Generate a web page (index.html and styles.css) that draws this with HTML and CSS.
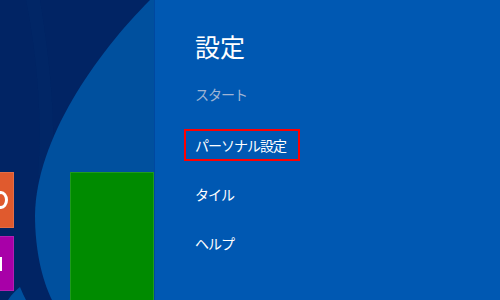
FILE: index.html
```html
<!DOCTYPE html>
<html>
<head>
    <title>設定</title>
    <link rel="stylesheet" href="styles.css">
</head>
<body>
    <div class="screen">
        <div class="start">
            <svg class="start-bg" width="155" height="300" viewBox="0 0 155 300">
                <rect width="155" height="300" fill="#012464"/>
                <path d="M26,0 C38,60 42,120 38,175 L52,175 C56,120 50,60 40,0 Z" fill="#022868" opacity="0.5"/>
                <path d="M150,0 C95,55 36,140 35,215 C35,250 42,280 52,300 L155,300 L155,0 Z" fill="#00509e"/>
                <path d="M8,300 C12,294 16,290 20,287 C22,292 24,296 26,300 Z" fill="#00509e"/>
                <rect x="154" width="1" height="300" fill="#0048a0"/>
            </svg>
            <div class="tiles">
                <div class="tile-col">
                    <div class="tile orange"><span class="ring"></span></div>
                    <div class="tile magenta"><span class="bar"></span></div>
                </div>
                <div class="tile green"></div>
            </div>
        </div>
        <div class="charm">
            <h1 class="charm-title">設定</h1>
            <div class="charm-sub">スタート</div>
            <ul class="charm-list">
                <li class="charm-item selected">パーソナル設定</li>
                <li class="charm-item">タイル</li>
                <li class="charm-item">ヘルプ</li>
            </ul>
        </div>
    </div>
</body>
</html>
```

FILE: styles.css
```css
body {
    margin: 0;
    font-family: "Noto Sans CJK JP", "Noto Sans", sans-serif;
    background-color: #012464;
}

.screen {
    display: flex;
    width: 500px;
    height: 300px;
    overflow: hidden;
}

.start {
    position: relative;
    width: 155px;
    height: 300px;
    flex-shrink: 0;
    overflow: hidden;
}

.start-bg {
    position: absolute;
    top: 0;
    left: 0;
}

.tiles {
    position: relative;
    display: flex;
    gap: 56px;
    padding-top: 172px;
    margin-left: -43px;
}

.tile-col {
    display: flex;
    flex-direction: column;
    gap: 8px;
}

.tile {
    box-sizing: border-box;
    border: 1px solid rgba(255, 255, 255, 0.12);
    display: flex;
    align-items: center;
    flex-shrink: 0;
}

.orange {
    width: 57px;
    height: 56px;
    background-color: #e05a2e;
}

.magenta {
    width: 57px;
    height: 55px;
    background-color: #a800a8;
}

.green {
    width: 84px;
    height: 140px;
    background-color: #008b00;
}

.ring {
    margin-left: 36px;
    width: 8px;
    height: 12px;
    border: 3px solid #fff;
    border-radius: 50%;
}

.bar {
    margin-left: 38px;
    width: 6px;
    height: 14px;
    background-color: #fff;
}

.charm {
    flex: 1;
    background-color: #0058b2;
    padding-left: 29px;
    color: #fff;
}

.charm-title {
    margin: 34px 0 0 11px;
    font-size: 25px;
    font-weight: normal;
    line-height: 25px;
}

.charm-sub {
    margin: 28px 0 0 11px;
    font-size: 14px;
    line-height: 15px;
    color: #9fb4d4;
    letter-spacing: -1px;
}

.charm-list {
    list-style: none;
    margin: 27px 0 0;
    padding: 0;
}

.charm-item {
    box-sizing: border-box;
    width: 116px;
    height: 32px;
    padding: 7px 9px 0;
    border: 2px solid transparent;
    font-size: 14px;
    line-height: 15px;
    letter-spacing: -1px;
    margin-bottom: 17px;
}

.charm-item.selected {
    border-color: #f00;
}
```
